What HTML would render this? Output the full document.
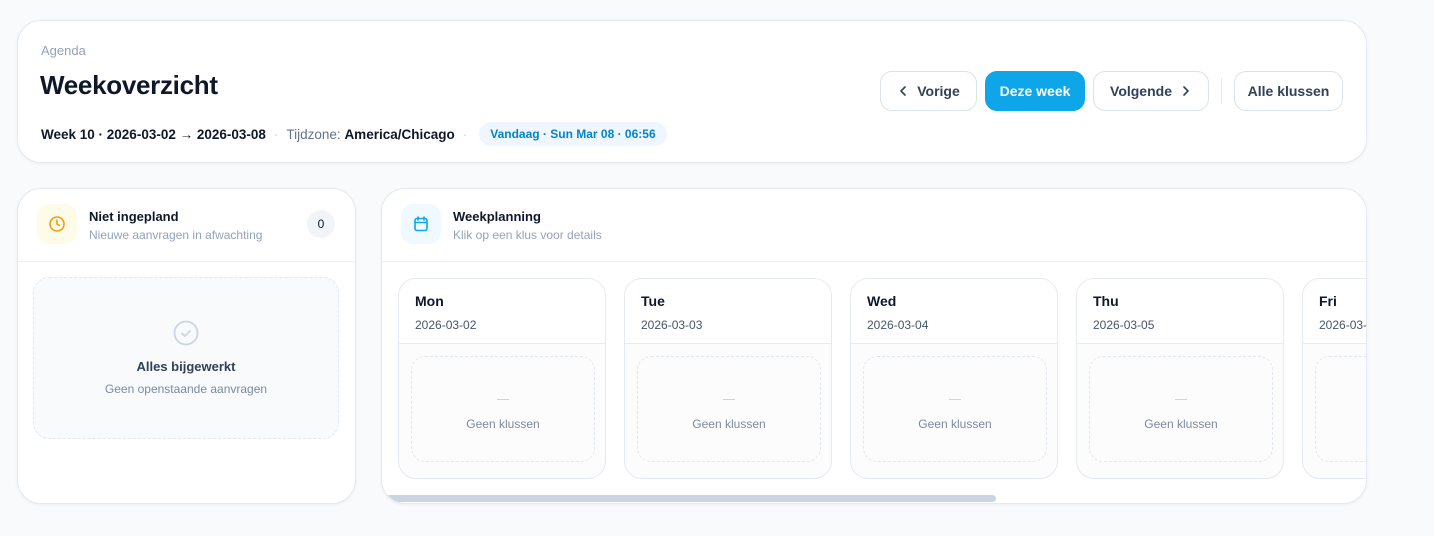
<!DOCTYPE html>
<html><head><meta charset="utf-8"><style>
*{box-sizing:border-box;margin:0;padding:0}
body{width:1434px;height:536px;background:#f8fafc;font-family:"Liberation Sans",sans-serif;position:relative;overflow:hidden;color:#0f172a}
.card{position:absolute;background:#fff;border:1px solid #e5e9f0;border-radius:24px;box-shadow:0 1px 3px rgba(15,23,42,.05)}
.abs{position:absolute}
.btn{position:absolute;top:71px;height:40px;border:1px solid #dbe2ea;border-radius:12px;background:#fff;font-size:14px;font-weight:bold;color:#334155;display:flex;align-items:center;justify-content:center;gap:8px}
.day{position:absolute;top:89px;width:208px;height:201px;border:1px solid #e5e9f0;border-radius:18px;background:#fcfcfd;overflow:hidden}
.day .hd{height:65px;background:#fff;border-bottom:1px solid #e8ecf2;padding:14px 16px}
.day .n{font-size:14px;font-weight:bold;color:#0f172a}
.day .d{font-size:12px;color:#475569;margin-top:9px}
.day .box{position:absolute;left:12px;top:77px;width:184px;height:106px;border:1px dashed #e2e8f0;border-radius:14px;text-align:center}
.day .box i{display:block;width:12px;height:1px;background:#cbd5e1;margin:42px auto 0}
.day .box span{display:block;font-size:12px;color:#7c8aa0;margin-top:17px}
</style></head><body>
<div class="card" style="left:17px;top:20px;width:1350px;height:143px"></div>
<div class="abs" style="left:41px;top:43px;font-size:13px;color:#94a3b8">Agenda</div>
<div class="abs" style="left:40px;top:70px;font-size:26px;font-weight:bold;color:#0f172a;letter-spacing:-0.3px">Weekoverzicht</div>
<div class="abs" style="left:41px;top:122px;font-size:13.5px;display:flex;align-items:center;white-space:nowrap">
<b>Week 10 · 2026-03-02 → 2026-03-08</b><span style="color:#cbd5e1;margin:0 8px">·</span><span style="color:#64748b">Tijdzone:&nbsp;</span><b>America/Chicago</b><span style="color:#cbd5e1;margin:0 8px">·</span>
<span style="background:#eff6ff;color:#0284c7;font-size:12px;font-weight:bold;padding:5px 11px;border-radius:12px;margin-left:4px">Vandaag · Sun Mar 08 · 06:56</span></div>
<div class="btn" style="left:880px;width:97px"><svg width="12" height="12" viewBox="0 0 12 12"><path d="M8 2L4 6l4 4" fill="none" stroke="#334155" stroke-width="1.6" stroke-linecap="round" stroke-linejoin="round"/></svg>Vorige</div>
<div class="btn" style="left:985px;width:100px;background:#0ea5e9;border-color:#0ea5e9;color:#fff">Deze week</div>
<div class="btn" style="left:1093px;width:116px">Volgende<svg width="12" height="12" viewBox="0 0 12 12"><path d="M4 2l4 4-4 4" fill="none" stroke="#334155" stroke-width="1.6" stroke-linecap="round" stroke-linejoin="round"/></svg></div>
<div class="abs" style="left:1221px;top:78px;width:1px;height:26px;background:#e2e8f0"></div>
<div class="btn" style="left:1234px;width:109px">Alle klussen</div>

<div class="card" style="left:17px;top:188px;width:339px;height:316px;overflow:hidden">
<div class="abs" style="left:0;top:72px;width:100%;height:1px;background:#eef1f5"></div>
</div>
<div class="abs" style="left:37px;top:204px;width:40px;height:40px;border-radius:12px;background:#fefce8;display:flex;align-items:center;justify-content:center"><svg width="18" height="18" viewBox="0 0 18 18"><circle cx="9" cy="9" r="7" fill="none" stroke="#f59e0b" stroke-width="1.6"/><path d="M9 5v4l2.5 1.5" fill="none" stroke="#f59e0b" stroke-width="1.6" stroke-linecap="round"/></svg></div>
<div class="abs" style="left:89px;top:209px;font-size:13px;font-weight:bold">Niet ingepland</div>
<div class="abs" style="left:89px;top:228px;font-size:12px;color:#94a3b8">Nieuwe aanvragen in afwachting</div>
<div class="abs" style="left:307px;top:210px;width:28px;height:28px;border-radius:14px;background:#f1f5f9;font-size:12px;display:flex;align-items:center;justify-content:center">0</div>
<div class="abs" style="left:33px;top:277px;width:306px;height:162px;border:1px dashed #e2e8f0;border-radius:16px;background:#f8fafc;text-align:center">
<svg style="margin-top:42px" width="26" height="26" viewBox="0 0 26 26"><circle cx="13" cy="13" r="11.5" fill="none" stroke="#cbd5e1" stroke-width="1.8"/><path d="M9 13.5l3 2.5 5-5" fill="none" stroke="#cbd5e1" stroke-width="1.8" stroke-linecap="round" stroke-linejoin="round"/></svg>
<div style="font-size:13px;font-weight:bold;color:#334155;margin-top:8px">Alles bijgewerkt</div>
<div style="font-size:12px;color:#7c8aa0;margin-top:8px">Geen openstaande aanvragen</div></div>

<div class="card" style="left:381px;top:188px;width:986px;height:316px;overflow:hidden">
<div class="abs" style="left:0;top:72px;width:100%;height:1px;background:#eef1f5"></div>
<div class="day" style="left:16px"><div class="hd"><div class="n">Mon</div><div class="d">2026-03-02</div></div><div class="box"><i></i><span>Geen klussen</span></div></div>
<div class="day" style="left:242px"><div class="hd"><div class="n">Tue</div><div class="d">2026-03-03</div></div><div class="box"><i></i><span>Geen klussen</span></div></div>
<div class="day" style="left:468px"><div class="hd"><div class="n">Wed</div><div class="d">2026-03-04</div></div><div class="box"><i></i><span>Geen klussen</span></div></div>
<div class="day" style="left:694px"><div class="hd"><div class="n">Thu</div><div class="d">2026-03-05</div></div><div class="box"><i></i><span>Geen klussen</span></div></div>
<div class="day" style="left:920px"><div class="hd"><div class="n">Fri</div><div class="d">2026-03-06</div></div><div class="box"><i></i><span>Geen klussen</span></div></div>
<div class="abs" style="left:4px;top:306px;width:610px;height:7px;border-radius:4px;background:#cbd5e1"></div>
</div>
<div class="abs" style="left:401px;top:204px;width:40px;height:40px;border-radius:12px;background:#f0f9ff;display:flex;align-items:center;justify-content:center"><svg width="18" height="18" viewBox="0 0 18 18"><rect x="3" y="3.5" width="12" height="12" rx="2" fill="none" stroke="#0ea5e9" stroke-width="1.6"/><path d="M6 2v3M12 2v3M3 7.5h12" stroke="#0ea5e9" stroke-width="1.6" stroke-linecap="round"/></svg></div>
<div class="abs" style="left:453px;top:209px;font-size:13px;font-weight:bold">Weekplanning</div>
<div class="abs" style="left:453px;top:228px;font-size:12px;color:#94a3b8">Klik op een klus voor details</div>
</body></html>
